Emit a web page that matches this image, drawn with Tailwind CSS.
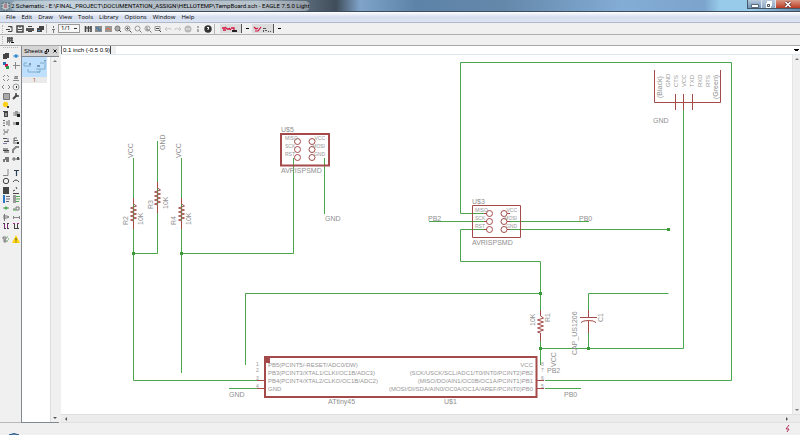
<!DOCTYPE html>
<html lang="en">
<head>
    <meta charset="UTF-8">
    <meta name="viewport" content="width=device-width, initial-scale=1.0">
    <title>2 Schematic - EAGLE 7.5.0 Light</title>
    <script src="https://cdn.jsdelivr.net/npm/@tailwindcss/browser@4"></script>
</head>

<body class="h-screen flex flex-col overflow-hidden bg-[#f0f0f0] font-['Open_Sans',sans-serif] text-[6px] leading-[8px] text-black">
    <!-- Title bar -->
    <header class="h-3 shrink-0 flex items-start justify-between border-b border-[#3d4c5c] bg-[linear-gradient(90deg,#7f98a8_0%,#a9bccb_8%,#8797a6_20%,#93a3b1_32%,#5c6b7a_38%,#3f4d5a_42%,#7fa3c9_45%,#5d83a8_52%,#6488aa_63%,#84add6_78%,#7ba3cc_88%,#98cbea_90%,#98cbea_94%,#6a8aa8_100%)]">
        <div class="flex items-center gap-[1px] pl-[1px] pt-[1px]">
            <svg class="size-[9px]" viewBox="0 0 9 9"><rect x="1" y="1" width="7" height="7" fill="#b9c3ca" stroke="#5c666e" stroke-dasharray="2 1"/><path d="M3 3h3M3 5h3" stroke="#a0454a"/></svg>
            <h1 class="rounded-full bg-white/35 whitespace-nowrap font-['Roboto',sans-serif] leading-[10px]">2 Schematic - E:\FINAL_PROJECT\DOCUMENTATION_ASSIGN\HELLOTEMP\TempBoard.sch - EAGLE 7.5.0 Light</h1>
        </div>
        <div class="flex h-[9px] w-[53px] border-l border-b border-[#46586a]">
            <button aria-label="Minimize" class="flex-1 flex items-center justify-center bg-linear-to-b from-[#b9cbdc] to-[#6e93b8] border-r border-[#dbe6ef]"><svg class="w-2 h-[7px]" viewBox="0 0 8 7"><path d="M.5 3.500h7v3h-7z" fill="#fff" stroke="#5b6b7b"/></svg></button>
            <button aria-label="Restore" class="flex-1 flex items-center justify-center bg-linear-to-b from-[#b9cbdc] to-[#8fa9c2] border-r border-[#dbe6ef]"><svg class="w-2 h-[7px]" viewBox="0 0 8 7"><path d="M2 0h5v5H6v2H1V2h1z" fill="#fff"/><path d="M2.500 3.500h2v2h-2z" fill="none" stroke="#44525f"/></svg></button>
            <button aria-label="Close" class="w-6 flex items-center justify-center bg-linear-to-b from-[#d99a87] to-[#b93822]"><svg class="w-2 h-[7px]" viewBox="0 0 8 7"><path d="M1.500 1l5 5M6.500 1l-5 5" stroke="#5a2a28" stroke-width="3"/><path d="M1.500 1l5 5M6.500 1l-5 5" stroke="#fff" stroke-width="1.700"/></svg></button>
        </div>
    </header>

    <!-- Menu -->
    <nav class="h-[11px] shrink-0 flex items-center gap-[6px] pl-[6px] border-b border-[#aeb9cc] bg-linear-to-b from-white via-[#d5ddee] to-[#dde4f2]">
        <a href="#">File</a>
        <a href="#">Edit</a>
        <a href="#">Draw</a>
        <a href="#">View</a>
        <a href="#">Tools</a>
        <a href="#">Library</a>
        <a href="#">Options</a>
        <a href="#">Window</a>
        <a href="#">Help</a>
    </nav>

    <!-- Action toolbar -->
    <div class="h-3 shrink-0 flex items-center border-b border-[#b0b0b0]">
        <span class="w-[5px] flex justify-center"><span class="h-2 border-l border-dotted border-[#b5b5b5]"></span></span>
        <div id="fileTools" class="flex"></div>
        <span class="h-[9px] mx-[1px] border-l border-[#b5b5b5]"></span>
        <div id="sheetTools" class="flex"></div>
        <select aria-label="Sheet" class="appearance-none w-[22px] h-[9px] pl-[2px] border border-[#9a9a9a] bg-[#f6f6f6] bg-[linear-gradient(#333,#333)] bg-[length:3px_1px] bg-[position:right_2px_center] bg-no-repeat leading-[7px]"><option>1/1</option></select>
        <div id="viewTools" class="flex pl-[3px]"></div>
        <span class="h-[10px] ml-[1px] border-l border-[#b5b5b5]"></span>
        <button aria-label="Design link" class="ml-[5px] w-[22px] h-[9px] bg-[#dcdcdc] border-r border-[#555]"><svg class="w-[20px] h-2" viewBox="0 0 20 8"><path d="M2 3h3M3 5h3M5 2l2 2M7 4h3M9 3l2 2M11 3h3v2" fill="none" stroke="#d3123f" stroke-width="1.300"/><path d="M12 5h5v2h-5z" fill="#222"/></svg></button>
        <button aria-label="More design links" class="w-[10px] flex justify-center"><span class="w-[3px] h-[1px] bg-black"></span></button>
        <button aria-label="Quote" class="w-[22px] h-[9px] bg-[#dcdcdc] border-r border-[#555]"><svg class="w-[20px] h-2" viewBox="0 0 20 8"><path d="M2 2l2 2 2-1M3 6h3l3-4" fill="none" stroke="#d3123f" stroke-width="1.200"/><path d="M11 3h3v1h-3zM11 5h1v2h-1zM13 5h2v1h-2zM16 6h1v1h-1zM18 6h1v1h-1z" fill="#555"/></svg></button>
        <button aria-label="More quotes" class="w-[10px] flex justify-center"><span class="w-[3px] h-[1px] bg-black"></span></button>
    </div>

    <!-- Parameter toolbar -->
    <div class="h-[11px] shrink-0 flex items-center border-b border-[#a8a8a8]">
        <span class="w-[5px] flex justify-center"><span class="h-2 border-l border-dotted border-[#b5b5b5]"></span></span>
        <button aria-label="Grid" class="w-[10px] h-[9px] flex items-center justify-center"><svg class="size-[7px]" viewBox="0 0 7 7"><path d="M0 0h6v5H0z" fill="#8a8a8a"/><path d="M.500 0v6M2.500 0v6M4.500 0v4M0 1.500h6M0 3.500h6" stroke="#5a5a5a"/><path d="M4 5h3v1H4z" fill="#111"/></svg></button>
    </div>

    <!-- Workspace -->
    <main class="flex-1 min-h-0 flex">
        <aside class="w-[21px] shrink-0 flex flex-col px-[1px] border-b border-[#b8b8b8]">
            <div class="h-1 mx-[2px] mt-[1px] border-t border-dotted border-[#b5b5b5]"></div>
            <div id="palette" class="flex flex-col gap-1"></div>
        </aside>

        <section class="w-[38px] shrink-0 flex flex-col border-l border-b border-[#828790]">
            <div class="h-[10px] shrink-0 flex items-center justify-between pl-[2px] pr-[1px] bg-[#d4d4d4]">
                <h2 class="font-['Liberation_Sans',sans-serif]">Sheets</h2>
                <div class="flex gap-[2px]">
                    <button aria-label="Float panel"><svg class="size-[6px]" viewBox="0 0 6 6"><path d="M2.500 3V1.500h2V4M1 3.500h2v2H1z" fill="none" stroke="#222"/></svg></button>
                    <button aria-label="Close panel"><svg class="size-[6px]" viewBox="0 0 6 6"><path d="M1.500 1.500l3 3M4.500 1.500l-3 3" stroke="#111"/></svg></button>
                </div>
            </div>
            <div class="flex-1 min-h-0 flex border-t border-[#828790] bg-white">
                <div class="flex-1">
                    <a href="#" class="block w-[25px] bg-[#eaeaea] text-center leading-[6px] text-[#b0522a]">
                        <svg class="w-full h-[20px] bg-[#bfdfff]" viewBox="0 0 25 20"><path d="M2 6h3M2 6v3h7M18 6h4M6 15h12M6 12v3M18 12v3h-3M23 4v8h-9" fill="none" stroke="#7faec6"/><path d="M7 6h2v2H7zM15 8h3v2h-3zM22 3h2v1h-2z" fill="#7797b5"/></svg>
                        1
                    </a>
                </div>
                <div class="w-[9px] flex flex-col items-center justify-between py-[3px] border-l border-[#dcdcdc] bg-[#f0f0f0]">
                    <svg class="w-1 h-[2px]" viewBox="0 0 4 2"><path d="M0 2l2-2 2 2z" fill="#777"/></svg>
                    <svg class="w-1 h-[2px]" viewBox="0 0 4 2"><path d="M0 0l2 2 2-2z" fill="#555"/></svg>
                </div>
            </div>
        </section>

        <section class="flex-1 min-w-0 flex flex-col pl-[2px]">
            <div class="h-[9px] shrink-0 flex items-center justify-between border-b border-[#dfe6ee] bg-white">
                <div class="flex h-full">
                    <input aria-label="Coordinates" readonly value="0.1 inch (-0.5 0.9)" class="w-[49px] h-full pl-[1px] border-l border-[#777] bg-white font-['Liberation_Sans',sans-serif]">
                    <input aria-label="Command" class="w-[6px] h-full border-l border-[#444] bg-[#f0f0f0]">
                </div>
                <svg class="w-[5px] h-[3px] mr-[1px]" viewBox="0 0 5 3"><path d="M0 0h5v1H4v1H1V1H0z"/></svg>
            </div>
            <div class="flex-1 min-h-0 flex bg-white">
                <svg class="flex-1 min-w-0 h-full font-['Liberation_Sans',sans-serif] text-[7px]" viewBox="61 55 731 359" preserveAspectRatio="xMinYMin meet" fill="none">
                    <!-- Nets -->
                    <g stroke="#4ba64b">
                        <path d="M133.500 158v222.500H257M157.500 141v112.500h-24M181.500 158v215M181.500 253.500h112V158M324.500 158v56"/>
                        <path d="M486 213.500h-25.500v-151h271v318H545M429 221.500h57M508 221.500h81M508 229.500h160M486 229.500h-25.500v32h80V310"/>
                        <path d="M245.500 365v-71.500h295M540.500 340v25M540.500 348.500h143V110M588.500 310v-16.500h80M588.500 333v17M229 388.500h28M545 388.500h36"/>
                    </g>
                    <path d="M132 252h3v3h-3zM180 252h3v3h-3zM539 292h3v3h-3zM539 347h3v3h-3zM587 347h3v3h-3zM667 228h3v3h-3z" fill="#3b9a3b"/>
                    <!-- Resistors and capacitor -->
                    <g stroke="#a54a4a">
                        <path id="resistor" d="M133.500 198v6l3 2-6 2 6 2-6 2 6 2-6 2 6 2-6 2 3 1v8"/>
                        <use href="#resistor" x="24" y="-16"/>
                        <use href="#resistor" x="48"/>
                        <use href="#resistor" x="407" y="112"/>
                        <path d="M588.500 310v7M580 317.500h17M581 322.500q2-2 7.500-2t7.500 2M588.500 320.500V333"/>
                    </g>
                    <!-- Connectors -->
                    <g stroke="#a54a4a">
                        <path d="M281 134h48v31.500h-48z" stroke-width="2"/>
                        <path d="M472.500 205.500h48v32h-48z"/>
                        <path d="M654.500 70v32.500h66V70M675.500 94v16M683.500 94v16M692.500 94v16"/>
                        <g id="pads">
                            <circle cx="297.500" cy="141.500" r="3"/><circle cx="297.500" cy="149.500" r="3"/><circle cx="297.500" cy="157.500" r="3"/>
                            <circle cx="312" cy="141.500" r="3"/><circle cx="312" cy="149.500" r="3"/><circle cx="312" cy="157.500" r="3"/>
                        </g>
                        <use href="#pads" x="192" y="72"/>
                        <path d="M484 213.500h3M484 221.500h3M484 229.500h3M507 213.500h3M507 221.500h3M507 229.500h3M257 380.500h7M257 388.500h7M537 380.500h7M537 388.500h7"/>
                        <path d="M265 357h271.500v40H265z" stroke-width="2"/>
                    </g>
                    <path d="M264 356h6v7h-6z" fill="#a54a4a"/>
                    <!-- Names and values -->
                    <g fill="#8f8f8f">
                        <text x="281" y="132">U$5</text>
                        <text x="281" y="173">AVRISPSMD</text>
                        <text x="325" y="221">GND</text>
                        <text x="472" y="204">U$3</text>
                        <text x="472" y="245">AVRISPSMD</text>
                        <text x="428" y="221">PB2</text>
                        <text x="579" y="221">PB0</text>
                        <text x="653" y="123">GND</text>
                        <text x="229" y="397">GND</text>
                        <text x="564" y="397">PB0</text>
                        <text x="547" y="373">PB2</text>
                        <text x="328" y="404">ATtiny45</text>
                        <text x="444" y="404">U$1</text>
                        <text transform="translate(133 158) rotate(-90)">VCC</text>
                        <text transform="translate(165 150) rotate(-90)">GND</text>
                        <text transform="translate(181 158) rotate(-90)">VCC</text>
                        <text transform="translate(128 225) rotate(-90)">R2</text>
                        <text transform="translate(143 225) rotate(-90)">10K</text>
                        <text transform="translate(153 209) rotate(-90)">R3</text>
                        <text transform="translate(168 209) rotate(-90)">10K</text>
                        <text transform="translate(176 225) rotate(-90)">R4</text>
                        <text transform="translate(191 225) rotate(-90)">10K</text>
                        <text transform="translate(535 326) rotate(-90)">10K</text>
                        <text transform="translate(550 322) rotate(-90)">R1</text>
                        <text transform="translate(577 355) rotate(-90)">CAP_US1206</text>
                        <text transform="translate(603 322) rotate(-90)">C1</text>
                        <text transform="translate(556 367) rotate(-90)">VCC</text>
                        <text transform="translate(662 98) rotate(-90)">(Black)</text>
                        <text transform="translate(718 99) rotate(-90)">(Green)</text>
                    </g>
                    <!-- Pin labels -->
                    <g fill="#969696" class="text-[5px]">
                        <text x="285" y="140">MISO</text><text x="285" y="148">SCK</text><text x="285" y="156">RST</text>
                        <text x="325" y="140" text-anchor="end">VCC</text><text x="325" y="148" text-anchor="end">MOSI</text><text x="325" y="156" text-anchor="end">GND</text>
                        <text x="475" y="212">MISO</text><text x="475" y="220">SCK</text><text x="475" y="228">RST</text>
                        <text x="517" y="212" text-anchor="end">VCC</text><text x="517" y="220" text-anchor="end">MOSI</text><text x="517" y="228" text-anchor="end">GND</text>
                        <text x="256" y="366">1</text><text x="256" y="372">2</text><text x="256" y="380">3</text><text x="256" y="388">4</text>
                        <text x="541" y="366">8</text><text x="541" y="372">7</text><text x="541" y="380">6</text><text x="541" y="388">5</text>
                    </g>
                    <g fill="#969696" class="text-[6px]">
                        <text transform="translate(670 87) rotate(-90)">GND</text>
                        <text transform="translate(678 87) rotate(-90)">CTS</text>
                        <text transform="translate(686 87) rotate(-90)">VCC</text>
                        <text transform="translate(694 87) rotate(-90)">TXD</text>
                        <text transform="translate(702 87) rotate(-90)">RXD</text>
                        <text transform="translate(710 87) rotate(-90)">RTS</text>
                        <text x="268" y="367">PB5(PCINT5/-RESET/ADC0/DW)</text>
                        <text x="268" y="375">PB3(PCINT3/XTAL1/CLKI/OC1B/ADC3)</text>
                        <text x="268" y="383">PB4(PCINT4/XTAL2/CLKO/OC1B/ADC2)</text>
                        <text x="268" y="391">GND</text>
                        <text x="533" y="367" text-anchor="end">VCC</text>
                        <text x="533" y="375" text-anchor="end">(SCK/USCK/SCL/ADC1/T0/INT0/PCINT2)PB2</text>
                        <text x="533" y="383" text-anchor="end">(MISO/DO/AIN1/OC0B/OC1A/PCINT1)PB1</text>
                        <text x="533" y="391" text-anchor="end">(MOSI/DI/SDA/AIN0/OC0A/OC1A/AREF/PCINT0)PB0</text>
                    </g>
                </svg>
                <div class="w-2 shrink-0 flex flex-col items-center justify-between py-[3px] border-l border-[#e4e4e4] bg-[#f0f0f0]">
                    <svg class="w-1 h-[2px]" viewBox="0 0 4 2"><path d="M0 2l2-2 2 2z" fill="#777"/></svg>
                    <svg class="w-1 h-[2px]" viewBox="0 0 4 2"><path d="M0 0l2 2 2-2z" fill="#777"/></svg>
                </div>
            </div>
            <div class="h-[9px] shrink-0 flex items-center justify-between pl-1 pr-3 border-y border-[#e0e0e0] bg-[#ececec]">
                <svg class="w-[2px] h-1" viewBox="0 0 2 4"><path d="M2 0L0 2l2 2z" fill="#555"/></svg>
                <svg class="w-[2px] h-1" viewBox="0 0 2 4"><path d="M0 0l2 2-2 2z" fill="#555"/></svg>
            </div>
        </section>
    </main>

    <!-- Status bar -->
    <footer class="h-3 shrink-0 flex items-end justify-between pl-2 pr-[9px]">
        <svg class="w-3 h-[2px]" viewBox="0 0 12 2"><path d="M1 2q5-3 10 0z" fill="#9fc0dc" stroke="#2b5a86"/></svg>
        <svg class="w-[6px] h-2 mb-[2px]" viewBox="0 0 6 8"><path d="M4 0L1 4h3L2 7" fill="none" stroke="#b5305a"/></svg>
    </footer>

<script>
    // Icons are drawn on an 8x8 grid with a dark stroke
    const fileTools = {
        Open: '<path d="M2 1.500h4v5H2M0 4.500h4M5 1v2"/>',
        Save: '<path d="M1 1h6v6H1z" stroke-width="1.500"/><path d="M2 4.500h4M3 2h2"/>',
        Print: '<path d="M0 3h8v3H0z" fill="#555" stroke="none"/><path d="M2 1.500h4M2 6.500h4"/>',
        CAM: '<path d="M1 3h5v4H1zM3 1h5v4H6V3H3z" fill="#444" stroke="none"/><path d="M2 5h2v1H2z" fill="#3e8fd0" stroke="none"/>'
    };
    const sheetTools = {
        Board: '<path d="M4.500 1v2M3 4.500h3M4.500 4v4" stroke="#777"/>'
    };
    const viewTools = {
        Use: '<path d="M1.500 1v6M4.500 1v6M7 1v6" stroke-width="1.600"/><path d="M1 3h6"/>',
        Script: '<path d="M1 1h7v6H1z" fill="#8b8b8b" stroke="none"/><path d="M2 3h3M4 5h3" stroke="#2672b8"/>',
        Run: '<path d="M1 1h7v6H1z" fill="#999" stroke="none"/><path d="M2 5l2-2 3 2" stroke="#e26a3a"/>',
        'Zoom fit': '<circle cx="3.500" cy="3.500" r="2.500" fill="#aaa" stroke="#777"/><path d="M5 5l2 2"/>',
        'Zoom in': '<circle cx="3.500" cy="3.500" r="2.500" stroke="#999"/><path d="M5.500 5.500l2 2"/><path d="M3.500 2v3M2 3.500h3" stroke="#777"/>',
        'Zoom out': '<circle cx="3.500" cy="3.500" r="2.500" stroke="#999"/><path d="M5.500 5.500l2 2" stroke="#777"/>',
        Redraw: '<circle cx="3.500" cy="3.500" r="2.500" stroke="#999"/><path d="M3 2v3h2M5.500 5.500l2 2" stroke="#777"/>',
        'Zoom select': '<path d="M1 1.500h5v4H1z" stroke="#999"/><path d="M2 3.500h3M5 5l2 2"/>',
        Undo: '<path d="M1 4h3M1 4l2-2M1 4l2 2M4 4q3-2 3 1" stroke="#c4c4c4"/>',
        Redo: '<path d="M7 4H4M7 4L5 2M7 4L5 6M4 4Q1 2 1 5" stroke="#c4c4c4"/>',
        Stop: '<circle cx="4" cy="4" r="3.500" fill="#b9b9b9" stroke="none"/><path d="M2 4h4" stroke="#eee"/>',
        Go: '<path d="M3 1h2v2H3zM3 4h2v3H3z" fill="#aaa" stroke="none"/>',
        Help: '<circle cx="4" cy="4" r="3.700" fill="#333" stroke="none"/><path d="M3 3q1-2 2 0l-1 1v1" stroke="#fff"/>'
    };

    const palette = [
        {
            Info: '<path d="M1 2h4v5H1zM3 1h4v5H5V2H3z" fill="#444" stroke="none"/>',
            Show: '<path d="M1 4q3-3 6 0q-3 3-6 0z" stroke="#8db8dc"/><circle cx="4" cy="4" r="1.500" fill="#2b86d0" stroke="none"/>',
            Display: '<path d="M1 1h3v3H1z" fill="#2670b8" stroke="none"/><path d="M3 3h3v3H3z" fill="#d0104a" stroke="none"/><path d="M4 5h3v3H4z" fill="#2a9a4a" stroke="none"/>',
            Mark: '<path d="M3.500 1v7M1 4.500h7" stroke="#888"/>'
        },
        {
            Move: '<path d="M1 3l2-2M5 1l2 2M1 5l2 2M5 7l2-2" stroke="#888"/>',
            Copy: '<path d="M3 2.500h3M1 6.500h6M3 2v2h2V3M2 4.500h4" stroke="#888"/>',
            Mirror: '<path d="M2 2L0 4l2 2M6 2l2 2-2 2" stroke="#888"/>',
            Rotate: '<circle cx="4" cy="4" r="3" stroke="#999"/><path d="M4 3h1v2H4z" fill="#333" stroke="none"/>',
            Group: '<path d="M1.500 1.500h6v6h-6z" fill="#aaa" stroke="#777"/>',
            Change: '<path d="M1 7l4-4" stroke-width="2"/><path d="M4 1v3h3" stroke-width="1.500"/>',
            Paste: '<circle cx="3.500" cy="3.500" r="2.700" fill="#ffd21e" stroke="none"/><path d="M5 5h2v2H5z" fill="#444" stroke="none"/>',
            '': '',
            Delete: '<path d="M1 1h5v1H1zM2 2h4v5H2z" fill="#444" stroke="none"/><path d="M4 3v3" stroke="#ddd"/>',
            Add: '<path d="M1 3h2M1 5h2M6 3h2" stroke="#888"/><path d="M3 1h3v5H3z" fill="#999" stroke="none"/><path d="M5 4h3v3H5z" fill="#222" stroke="none"/>',
            Pinswap: '<path d="M1 1.500h2M5 2v4M1 6.500h2M7 1v6M1 4h2" stroke="#666"/>',
            Replace: '<path d="M1 3h3v3H1z" fill="#aaa" stroke="none"/><path d="M4 3h3v3H4z" fill="#222" stroke="none"/>',
            Gateswap: '<path d="M2 1v2l2 1 2-1V1M2 7V5l2-1 2 1" stroke="#888"/>',
            ' ': '',
            Name: '<path d="M1 1h4v1H1zM2 4h5v1H2z" fill="#555" stroke="none"/><path d="M1 6.500h4M6 1v3" stroke="#8080a0"/>',
            Value: '<path d="M2 1h3M2 3.500h4M3 6h4M2 1v6" stroke="#666"/><path d="M5 5h2v2H5z" fill="#222" stroke="none"/>',
            Smash: '<path d="M1 2h5v2H1zM2 5h5v2H2z" fill="#999" stroke="none"/><path d="M1 4.500h6"/>',
            Miter: '<path d="M1 7V4l3-3h3" stroke="#888" stroke-width="2"/>',
            Split: '<path d="M1 7V4h2V2h4v5H4V5H3v2z" fill="#777" stroke="none"/>',
            Invoke: '<path d="M0 4h8M2 2v4" stroke="#666"/><path d="M5 2h2v3H5z" fill="#555" stroke="none"/>'
        },
        {
            Wire: '<path d="M1 7.500h5V1" stroke="#888"/>',
            Text: '<path d="M2 2.500h5M4.500 2v6" stroke="#2d4256" stroke-width="1.200"/>',
            Circle: '<circle cx="4" cy="4" r="2.700"/>',
            Arc: '<path d="M1 5q3-4 6 0"/>',
            Rectangle: '<path d="M1 1h6v7H1z" fill="#444" stroke="none"/>',
            Polygon: '<path d="M1 7.500h6M1 5l2-1M4 1l1 2"/>',
            Bus: '<path d="M1 0h2v8H1z" fill="#2b78c8" stroke="none"/><path d="M4 1.500h4M4 4h4M4 6.500h3" stroke="#667"/>',
            Net: '<path d="M1 0h3v8H1z" fill="#999" stroke="none"/><path d="M4 1.500h4M4 4h4M4 6.500h3" stroke="#4aa84a"/>',
            Junction: '<path d="M1 4h6" stroke="#888"/><circle cx="4" cy="4" r="1.500" fill="#3fb04a" stroke="none"/>',
            Label: '<path d="M1 5h2M4 3h3v3H4z" stroke="#777"/><path d="M1 6h3" stroke="#4aa84a"/>',
            Attribute: '<path d="M2.500 1v7M1 3h4l2 1-2 1H1" stroke="#777"/>',
            Dimension: '<path d="M1 4.500h7M1.500 3v3M7.500 3v3" stroke="#888"/>',
            Module: '<path d="M2.500 1v6M5.500 1v6" stroke="#7a2c72"/><path d="M1 1.500h2M2 6.500h2M5 1.500h2M5 6.500h2"/>',
            Port: '<path d="M2.500 1v6M5.500 1v6"/><path d="M1 1.500h2M5 1.500h2" stroke="#a03090"/><path d="M2 6.500h5"/>'
        },
        {
            ERC: '<path d="M1 2h3v2H1zM2 5h2v2H2z" stroke="#777"/><path d="M5 2h1M6 4h1M5 6h1" stroke="#4aa84a"/>',
            Errors: '<path d="M4 0l4 8H0z" fill="#ffd60a" stroke="none"/><path d="M4 3v2.500M4 6.500v1"/>'
        }
    ];

    // Build one icon button; empty names leave a blank cell
    function iconButton(name, shapes) {
        if (!name.trim()) return '<span></span>';
        return `<button title="${name}" aria-label="${name}" class="w-[10px] h-[9px] flex items-center justify-center">
            <svg class="size-2" viewBox="0 0 8 8" fill="none" stroke="#444">${shapes}</svg>
        </button>`;
    }

    function renderTools(tools) {
        return Object.entries(tools).map(([name, shapes]) => iconButton(name, shapes)).join('');
    }

    document.getElementById('fileTools').innerHTML = renderTools(fileTools);
    document.getElementById('sheetTools').innerHTML = renderTools(sheetTools);
    document.getElementById('viewTools').innerHTML = renderTools(viewTools);
    document.getElementById('palette').innerHTML = palette
        .map(group => `<div class="grid grid-cols-2 auto-rows-[9px]">${renderTools(group)}</div>`)
        .join('');
</script>
</body>
</html>
